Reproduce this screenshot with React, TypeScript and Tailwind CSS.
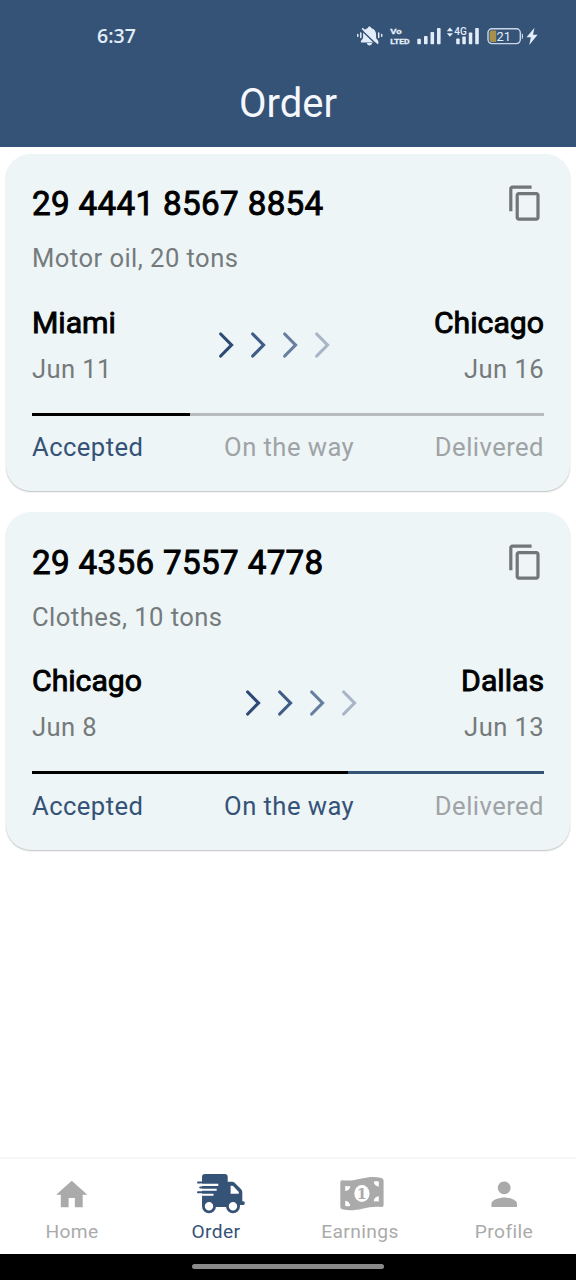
import type { ReactNode } from 'react'
import { MdContentCopy, MdHome, MdPerson } from 'react-icons/md'

type Order = {
  id: string
  cargo: string
  from: string
  fromDate: string
  to: string
  toDate: string
  progress: number
  onTheWay: boolean
}

const orders: Order[] = [
  { id: '29 4441 8567 8854', cargo: 'Motor oil, 20 tons', from: 'Miami', fromDate: 'Jun 11', to: 'Chicago', toDate: 'Jun 16', progress: 158, onTheWay: false },
  { id: '29 4356 7557 4778', cargo: 'Clothes, 10 tons', from: 'Chicago', fromDate: 'Jun 8', to: 'Dallas', toDate: 'Jun 13', progress: 316, onTheWay: true },
]

function StatusIcons() {
  return (
    <svg width="184" height="24" viewBox="356 24 184 24" fill="#e3edf9">
      <path d="M369.5 26.6c-.9 0-1.4.6-1.5 1.4-3.4.9-4.9 3.6-4.9 6.6v3.5l-2.2 3v1.4h17.4v-1.4l-2.2-3v-3.5c0-3-1.6-5.7-5-6.6-.1-.8-.7-1.4-1.6-1.4z" />
      <path d="M366.9 43h5.2c-.2 1.6-1.2 2.4-2.6 2.4s-2.4-.8-2.6-2.4z" />
      <path d="M361.7 30.2l15 14.4" stroke="#355277" strokeWidth="1.5" fill="none" />
      <path d="M362.2 28.4l16 15.3" stroke="#e3edf9" strokeWidth="1.7" fill="none" />
      <path d="M360.8 33v4.6M357.8 34.4v1.8M378.7 33v4.6M381.7 34.4v1.8" stroke="#e3edf9" strokeWidth="1.5" strokeLinecap="round" fill="none" />
      <g fontSize="8" fontWeight="700" fontFamily="Roboto, sans-serif" stroke="#e3edf9" strokeWidth=".3">
        <text x="390.3" y="34.4" textLength="11.5" lengthAdjust="spacingAndGlyphs">Vo</text>
        <text x="390.3" y="43.9" textLength="19.3" lengthAdjust="spacingAndGlyphs">LTED</text>
      </g>
      <rect x="417.3" y="38.7" width="3.6" height="5.5" rx=".8" />
      <rect x="424" y="36" width="3.6" height="8.2" rx=".8" />
      <rect x="430.5" y="32" width="3.6" height="12.2" rx=".8" />
      <rect x="437" y="28" width="3.6" height="16.2" rx=".8" />
      <path d="M446.8 31.2l3.1-3.6 3.1 3.6zM446.8 33.2l3.1 3.6 3.1-3.6z" />
      <text x="454.3" y="35.4" fontSize="11.5" fontWeight="500" fontFamily="Roboto, sans-serif" textLength="12.5" lengthAdjust="spacingAndGlyphs">4G</text>
      <rect x="456.2" y="38.5" width="3.5" height="5.7" rx=".8" />
      <rect x="462.3" y="36.5" width="3.5" height="7.7" rx=".8" />
      <rect x="468.8" y="32.5" width="3.5" height="11.7" rx=".8" />
      <rect x="475.2" y="28" width="3.6" height="16.2" rx=".8" />
      <rect x="488" y="28.8" width="32.3" height="14.8" rx="4" fill="none" stroke="#c9d7e8" strokeWidth="1.4" />
      <path d="M489.6 32.5q0-2 2-2h4.6v11.4h-4.6q-2 0-2-2z" fill="#a8904a" />
      <path d="M521.8 33.2q1.2.6 1.2 3t-1.2 3z" />
      <text x="496.5" y="41" fontSize="13.5" fontFamily="Roboto, sans-serif" textLength="14.5" lengthAdjust="spacingAndGlyphs">21</text>
      <path d="M534.5 27.7l-8 9.6h4.3l-1.5 7.8 8.3-10.4h-4.6z" />
    </svg>
  )
}

function TruckIcon() {
  return (
    <svg width="50" height="42" viewBox="196 1173 50 42">
      <path
        fill="currentColor"
        d="M202 1204.5V1177q0-3 3-3h19.7q3 0 3 3v4.8h4.3q1.7 0 2.9 1.2l6 6q1.4 1.4 1.4 3.3v8.9h1q1.5 0 1.5 1.9t-1.5 1.9h-4.1l-7 2h-19z"
      />
      <path d="M198 1182.5h8M200.2 1187.4h6M198 1192.3h6" stroke="currentColor" strokeWidth="2" strokeLinecap="round" />
      <path d="M201 1184.9h17.3M201 1189.8h15.7M201 1194.7h12.5" stroke="#fff" strokeWidth="2.1" />
      <path d="M230.6 1185.7h1.5q.6 0 1 .4l5.7 5.8v1.8h-8.2z" fill="#fff" />
      <circle cx="209" cy="1206.2" r="5.6" fill="#fff" stroke="currentColor" strokeWidth="2.8" />
      <circle cx="233" cy="1206.2" r="5.6" fill="#fff" stroke="currentColor" strokeWidth="2.8" />
    </svg>
  )
}

function BanknoteIcon() {
  return (
    <svg width="46" height="38" viewBox="339.5 1175 46 38">
      <path
        fill="currentColor"
        d="M340.8 1182.3q0-2.3 2.3-2.1c7.5.8 12.5-.3 19-1.8 7-1.6 13-2.2 20-.5q2 .5 2 2.5v24.5q0 2.3-2.3 2.1c-7.5-.8-12.5.3-19 1.7-7 1.6-13 2.2-20 .6q-2-.5-2-2.5z"
      />
      <g fill="#fff">
        <ellipse cx="362.4" cy="1193.6" rx="7.6" ry="8.5" />
        <path d="M345.7 1186.1q2.7.3 5.1-.1-.4 4.4-5.1 5.1z" />
        <path d="M379.3 1181.5q-2.7-.6-5 .1.4 4.500 5 5.200z" />
        <path d="M345.7 1200.8q4.700.7 5 5.300-2.500.3-5-.1z" />
        <path d="M379.3 1196.3q-4.700.6-5 5.100 2.600-.3 5 .1z" />
      </g>
      <text x="362.4" y="1198.8" textAnchor="middle" fontSize="14.5" fontWeight="700" fontFamily="DejaVu Serif, serif" fill="currentColor">1</text>
    </svg>
  )
}

function Chevrons() {
  return (
    <div className="-ml-px flex">
      {['#2d4a75', '#3f5d87', '#677f9f', '#a7b5c7'].map((color) => (
        <svg key={color} width="32" height="32" viewBox="0 0 32 32" fill="none" stroke={color} strokeWidth="3.2" strokeLinecap="round" strokeLinejoin="miter">
          <path d="M10.7 5L21.5 16L10.7 27" />
        </svg>
      ))}
    </div>
  )
}

function Stop({ city, date }: { city: string; date: string }) {
  return (
    <div>
      <h3 className="text-[30.2px] leading-[38px] text-black [-webkit-text-stroke:0.9px_black]">{city}</h3>
      <p className="mt-[8px] text-[25.6px] leading-[38px] tracking-[0.4px] text-[#757a7b]">{date}</p>
    </div>
  )
}

function OrderCard({ order }: { order: Order }) {
  return (
    <article className="h-[337.6px] rounded-[25px] bg-[#edf5f7] px-[26px] pt-[30.4px] shadow-[0_1px_1.5px_rgba(0,0,0,0.25)]">
      <div className="flex h-[38.4px] items-center justify-between">
        <h2 className="pt-[2px] text-[33.2px] leading-[38px] tracking-[0.34px] text-black [-webkit-text-stroke:0.9px_black]">{order.id}</h2>
        <MdContentCopy className="mt-px size-[38.4px] text-[#717778]" />
      </div>
      <p className="mt-[17px] text-[25.6px] leading-[38px] tracking-[0.45px] text-[#757a7b]">{order.cargo}</p>
      <div className="mt-[26.6px] flex h-[84px] justify-between">
        <Stop city={order.from} date={order.fromDate} />
        <div className="mt-[25px]"><Chevrons /></div>
        <div className="text-right"><Stop city={order.to} date={order.toDate} /></div>
      </div>
      <div className={`mt-[25px] h-[3px] ${order.onTheWay ? 'bg-[#355277]' : 'bg-[#b7bbbb]'}`}>
        <div className="h-full bg-black" style={{ width: order.progress }} />
      </div>
      <div className="mt-[12.4px] flex justify-between text-[25.6px] leading-[38px] tracking-[0.45px] text-[#9fa3a5]">
        <span className="text-[#355277]">Accepted</span>
        <span className={order.onTheWay ? 'text-[#355277]' : ''}>On the way</span>
        <span>Delivered</span>
      </div>
    </article>
  )
}

function NavItem({ label, active, children }: { label: string; active?: boolean; children: ReactNode }) {
  return (
    <button className={`flex flex-1 flex-col items-center ${active ? 'text-[#355277]' : 'text-[#aaa]'}`}>
      <span className="mt-[15.6px] flex h-[38.4px] items-center justify-center">{children}</span>
      <span className="mt-[7px] text-[19.2px] leading-[24px] tracking-[0.4px]">{label}</span>
    </button>
  )
}

export default function App() {
  return (
    <div className="flex h-[1280px] w-[576px] flex-col overflow-hidden bg-white font-[Roboto,sans-serif]">
      <header className="h-[147px] bg-[#355277] text-[#f4f8fd]">
        <div className="flex h-[60px] items-center justify-between pt-[12px] pr-[36px] pl-[97px]">
          <span className="font-['Open_Sans',sans-serif] text-[19.5px] leading-6 font-semibold text-[#e3edf9]">6:37</span>
          <StatusIcons />
        </div>
        <h1 className="mt-[20px] text-center text-[40px] leading-[48px]">Order</h1>
      </header>
      <main className="flex flex-1 flex-col gap-[20.8px] px-[6px] pt-[6.6px]">
        {orders.map((order) => <OrderCard key={order.id} order={order} />)}
      </main>
      <nav className="flex h-[95px] bg-white shadow-[0_-1px_2px_rgba(0,0,0,0.07)]">
        <NavItem label="Home"><MdHome className="mt-px size-[37.5px]" /></NavItem>
        <NavItem label="Order" active><span className="mt-px ml-[10px]"><TruckIcon /></span></NavItem>
        <NavItem label="Earnings"><span className="mt-px ml-[4px]"><BanknoteIcon /></span></NavItem>
        <NavItem label="Profile"><MdPerson className="size-[38.4px]" /></NavItem>
      </nav>
      <div className="flex h-[26px] justify-center bg-black pt-[10px]">
        <div className="h-[5px] w-[192px] rounded-full bg-[#8a8a8a]" />
      </div>
    </div>
  )
}
